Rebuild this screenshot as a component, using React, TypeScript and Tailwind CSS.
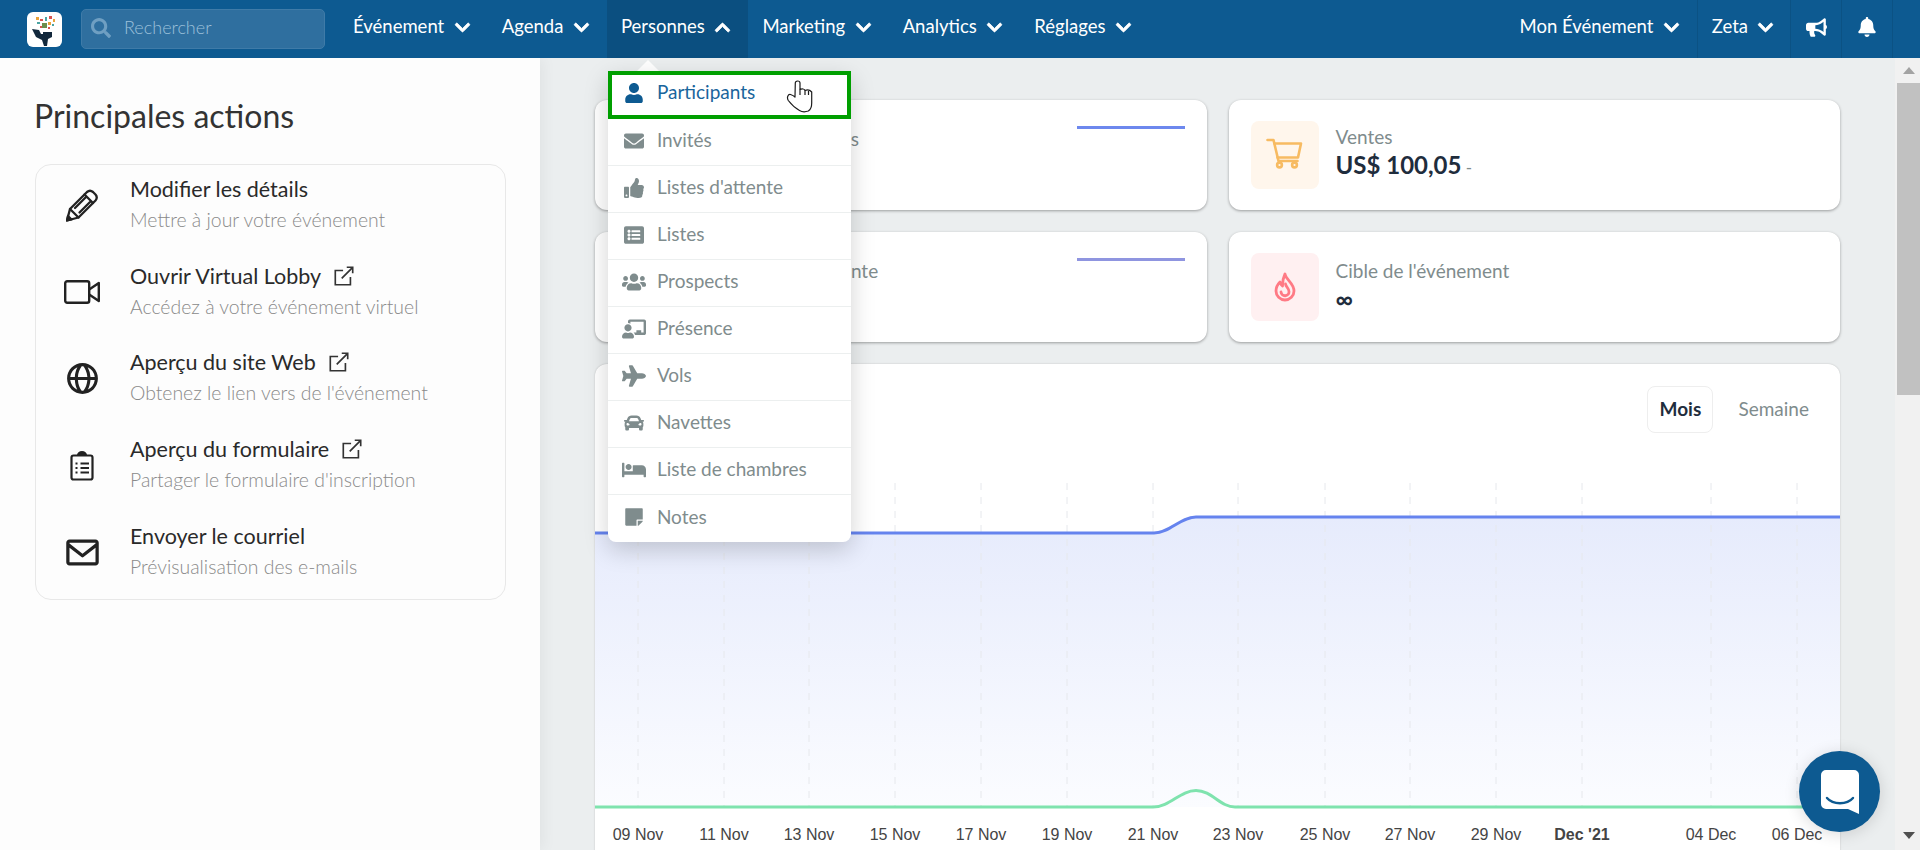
import React from "react";
import {
  FaSearch, FaChevronDown, FaChevronUp, FaBullhorn, FaBell, FaUser, FaEnvelope, FaThumbsUp, FaListAlt,
  FaUsers, FaChalkboardTeacher, FaPlane, FaCar, FaBed, FaStickyNote,
} from "react-icons/fa";
import { BiGlobe, BiEnvelope } from "react-icons/bi";

const Chevron = ({ up }: { up?: boolean }) =>
  up ? <FaChevronUp className="w-[17px] h-[17px] stroke-[24px]" /> : <FaChevronDown className="w-[17px] h-[17px] stroke-[24px]" />;

function NavItem({ label, up, active, children }: { label: string; up?: boolean; active?: boolean; children?: React.ReactNode }) {
  return (
    <div className={`relative h-full flex items-center gap-[9.5px] pl-[14px] pr-[17px] pb-[4px] ${active ? "bg-[#0b4f80]" : ""}`}>
      <span>{label}</span>
      <Chevron up={up} />
      {children}
    </div>
  );
}

const Logo = () => (
  <div className="w-[35px] h-[35px] rounded-[6px] bg-white flex items-center justify-center shrink-0">
    <svg viewBox="0 0 35 35" className="w-[35px] h-[35px]">
      <rect x="9" y="5" width="3" height="3" fill="#e9a23b" />
      <rect x="13" y="7" width="3" height="2" fill="#d9534f" />
      <rect x="18" y="5" width="2" height="4" fill="#4aa3a2" />
      <rect x="22" y="4" width="3" height="3" fill="#d9534f" />
      <rect x="26" y="7" width="2" height="3" fill="#e9a23b" />
      <rect x="10" y="10" width="3" height="2" fill="#4aa3a2" />
      <rect x="15" y="11" width="5" height="5" fill="#6b8e4e" />
      <rect x="21" y="10" width="3" height="3" fill="#e9a23b" />
      <rect x="25" y="12" width="2" height="2" fill="#4aa3a2" />
      <rect x="13" y="14" width="2" height="2" fill="#d9534f" />
      <rect x="21" y="15" width="2" height="2" fill="#d9534f" />
      <path d="M5 17 L12 18 L14 22 L16 22 L16 20 L25 20 L25 25 L21 27 L20 34 L17 34 L15 28 L9 25 Z" fill="#12283c" />
    </svg>
  </div>
);

const Header = () => (
  <header className="h-[58px] shrink-0 bg-[#0d5a91] text-white text-[18.5px] flex items-center relative z-30">
    <div className="pl-[27px] pr-[19px]"><Logo /></div>
    <div className="w-[244px] h-[40px] rounded-[5px] bg-[#2f6f9f] border border-[#3f7ba8] flex items-center pl-[9px] pb-[3px] gap-[13px] text-[#9cc0da] text-[18px] font-light">
      <FaSearch className="w-[20px] h-[20px] text-[#6f9fc2]" />
      <span>Rechercher</span>
    </div>
    <nav className="flex h-full items-center ml-[14px]">
      <NavItem label="Événement" />
      <NavItem label="Agenda" />
      <NavItem label="Personnes" up active>
        <div className="absolute left-[30px] top-[60px] w-0 h-0 border-x-[11px] border-x-transparent border-b-[11px] border-b-white" />
        <Menu />
      </NavItem>
      <NavItem label="Marketing" />
      <NavItem label="Analytics" />
      <NavItem label="Réglages" />
    </nav>
    <div className="ml-auto flex h-full items-center">
      <NavItem label="Mon Événement" />
      <div className="h-full border-l border-[#0b5284] flex items-center gap-[9px] pl-[14px] pr-[16px] pb-[4px]"><span>Zeta</span><Chevron /></div>
      <div className="h-full w-[51px] border-l border-[#0b5284] flex items-center justify-center pb-[4px]"><FaBullhorn className="w-[21px] h-[21px]" /></div>
      <div className="h-full w-[52px] border-x border-[#0b5284] flex items-center justify-center pb-[4px]"><FaBell className="w-[18px] h-[20px]" /></div>
      <div className="w-[27px]" />
    </div>
  </header>
);

const wide = "w-[24px] h-[22px] text-[#7f8c8d]";
const normal = "w-[22px] h-[20px] text-[#7f8c8d]";
const menuItems: [string, React.ComponentType<{ className?: string }>, string][] = [
  ["Invités", FaEnvelope, normal],
  ["Listes d'attente", FaThumbsUp, normal],
  ["Listes", FaListAlt, normal],
  ["Prospects", FaUsers, wide],
  ["Présence", FaChalkboardTeacher, wide],
  ["Vols", FaPlane, wide],
  ["Navettes", FaCar, normal],
  ["Liste de chambres", FaBed, wide],
  ["Notes", FaStickyNote, normal],
];

function Menu() {
  return (
    <div className="absolute left-[1px] top-[71px] w-[243px] bg-white rounded-b-[8px] shadow-[0_8px_24px_rgba(0,0,0,0.18)] text-[19px] text-[#7f8c8d]">
      <div className="h-[48px] border-[4px] border-[#009f00] flex items-center pl-[12px] pb-[5px] text-[#1a659c]">
        <span className="w-[20px] flex justify-center"><FaUser className="w-[18px] h-[20px] text-[#0d5a91]" /></span>
        <span className="ml-[13px]">Participants</span>
      </div>
      {menuItems.map(([label, Icon, cls], i) => (
        <div key={label} className={`h-[47px] flex items-center pl-[16px] pb-[3px] ${i < menuItems.length - 1 ? "border-b border-[#ecefef]" : ""}`}>
          <span className="w-[20px] flex justify-center"><Icon className={`shrink-0 ${cls}`} /></span>
          <span className="ml-[13px]">{label}</span>
        </div>
      ))}
    </div>
  );
}

const PencilIcon = () => (
  <svg viewBox="0 0 32 33" className="w-[32px] h-[33px]" fill="none" stroke="#222" strokeWidth="2.3" strokeLinejoin="round" strokeLinecap="round">
    <path d="M1 31.5 L4 20 L21 3 Q24 0.5 27 3 L29.5 5.5 Q32 8.5 29.5 11.5 L12.5 28.5 Z" />
    <path d="M4 20 L12.5 28.5 M18.5 5.5 L27 14 M9 19 L19.5 8.5 M13.5 23.5 L24 13" />
    <path d="M1 31.5 L2 27 L5.5 30.5 Z" fill="#222" />
  </svg>
);

const VideoIcon = () => (
  <svg viewBox="0 0 36 24" className="w-[36px] h-[24px]" fill="none" stroke="#222" strokeWidth="2.4" strokeLinejoin="round">
    <rect x="1.2" y="1.2" width="24" height="21.6" rx="2" />
    <path d="M25.2 9.5 L34.8 3 V21 L25.2 14.5" />
  </svg>
);

const ClipboardIcon = () => (
  <svg viewBox="0 0 24 30" className="w-[24px] h-[31px]" fill="none" stroke="#222" strokeWidth="2.2">
    <rect x="1.5" y="5" width="21" height="24" rx="2" />
    <path d="M8 5 a4 3.5 0 0 1 8 0" fill="#222" />
    <path d="M10.5 13 H19 M10.5 17.5 H19 M10.5 22 H19 M5.5 13 H7.5 M5.5 17.5 H7.5 M5.5 22 H7.5" strokeWidth="2" />
  </svg>
);

const ExternalIcon = () => (
  <svg viewBox="0 0 24 24" className="w-[22px] h-[22px]" fill="none" stroke="#333" strokeWidth="1.8">
    <path d="M19 13 V21.5 H2.5 V6 H11" />
    <path d="M9.5 14.5 L21.5 2.5 M15 2.5 H21.5 V9" />
  </svg>
);

const actions: { title: string; sub: string; ext?: boolean; icon: React.ReactNode }[] = [
  { title: "Modifier les détails", sub: "Mettre à jour votre événement", icon: <PencilIcon /> },
  { title: "Ouvrir Virtual Lobby", sub: "Accédez à votre événement virtuel", ext: true, icon: <VideoIcon /> },
  { title: "Aperçu du site Web", sub: "Obtenez le lien vers de l'événement", ext: true, icon: <BiGlobe className="w-[37px] h-[37px]" /> },
  { title: "Aperçu du formulaire", sub: "Partager le formulaire d'inscription", ext: true, icon: <ClipboardIcon /> },
  { title: "Envoyer le courriel", sub: "Prévisualisation des e-mails", icon: <BiEnvelope className="w-[39px] h-[39px]" /> },
];

const LeftPanel = () => (
  <aside className="w-[540px] shrink-0 bg-[#fdfdfd] pl-[34px] pt-[36px] shadow-[3px_0_14px_rgba(0,0,0,0.05)] relative z-10">
    <h1 className="text-[32px] leading-[44px] text-[#333] font-normal">Principales actions</h1>
    <div className="mt-[26px] ml-[1px] w-[471px] h-[436px] rounded-[16px] border border-[#e8e8e8] text-[#2a2a2a]">
      {actions.map((a) => (
        <div key={a.title} className="h-[86.6px] flex items-center pb-[8px]">
          <div className="w-[92px] mt-[3px] shrink-0 flex justify-center text-[#222]">{a.icon}</div>
          <div className="ml-[2px]">
            <div className="flex items-center gap-[12px] text-[21.5px] leading-[28px]">
              <span>{a.title}</span>
              {a.ext && <ExternalIcon />}
            </div>
            <div className="text-[19.4px] leading-[26px] mt-[4px] text-[#8a8a8a] font-light">{a.sub}</div>
          </div>
        </div>
      ))}
    </div>
  </aside>
);

const cardCls = "h-[110px] bg-white rounded-[12px] shadow-[0_1px_3px_rgba(0,0,0,0.35)] flex items-center relative pl-[22px]";

function StatCard({ box, icon, label, value, line, small }: { box: string; icon: React.ReactNode; label: React.ReactNode; value: string; line?: string; small?: boolean }) {
  return (
    <div className={cardCls}>
      <div className={`w-[68px] h-[68px] rounded-[8px] flex items-center justify-center ${box}`}>{icon}</div>
      <div className="ml-[17px]">
        <div className="text-[19px] leading-[24px] text-[#7f8c8d] -mt-[1px]">{label}</div>
        <div className="text-[24px] leading-[32px] font-bold text-[#1f2d3d]">
          {value}
          {small && <span className="text-[17px] font-normal text-[#7f8c8d]"> -</span>}
        </div>
      </div>
      {line && <div className={`absolute top-[26px] left-[482px] w-[108px] h-[3px] ${line}`} />}
    </div>
  );
}

const CartIcon = () => (
  <svg viewBox="0 0 68 68" className="w-[68px] h-[68px]" fill="none" stroke="#f7bb62" strokeWidth="2.6" strokeLinejoin="round" strokeLinecap="round">
    <path d="M16.5 19 H22.5 L27.5 40 H46.5" />
    <path d="M23.5 22.5 H50 L47 36.5 H26.5" />
    <circle cx="28.5" cy="44" r="2.4" />
    <circle cx="43.5" cy="44" r="2.4" />
  </svg>
);

const FlameIcon = () => (
  <svg viewBox="0 0 24 30" className="w-[24px] h-[30px]" fill="none" stroke="#ff7a85" strokeWidth="2.8" strokeLinejoin="round" strokeLinecap="round">
    <path d="M12 2 C13 8 21 11 21 19 A9 9 0 0 1 3 19 C3 15 5 12 7 10 C7.5 12.5 8.5 13.5 9.5 14 C9.5 9 10.5 5 12 2 Z" />
    <path d="M12.5 12 C13 15 16 16.5 16 19.5 A4 4 0 0 1 8 20" />
  </svg>
);

const gridX = [43, 129, 214, 300, 386, 472, 558, 643, 730, 815, 901, 987, 1116, 1202];
const labels = ["09 Nov", "11 Nov", "13 Nov", "15 Nov", "17 Nov", "19 Nov", "21 Nov", "23 Nov", "25 Nov", "27 Nov", "29 Nov", "Dec '21", "04 Dec", "06 Dec"];

const Chart = () => (
  <svg viewBox="0 0 1245 420" className="w-[1245px] h-[420px] block">
    <defs>
      <linearGradient id="areaBlue" x1="0" y1="0" x2="0" y2="1">
        <stop offset="0" stopColor="#e6ebfc" />
        <stop offset="1" stopColor="#fbfcff" />
      </linearGradient>
    </defs>
    <path d="M0 100 H559 C575 100 585 84 601 84 H1245 V374 H0 Z" fill="url(#areaBlue)" />
    {gridX.map((x) => (
      <line key={x} x1={x} x2={x} y1="50" y2="374" stroke="#e6e8ec" strokeWidth="1" strokeDasharray="7 7" />
    ))}
    <path d="M0 100 H559 C575 100 585 84 601 84 H1245" fill="none" stroke="#6583ee" strokeWidth="3" />
    <path d="M0 374 H558 C575 374 585 357.5 601 357.5 C617 357.5 625 374 640 374 H1245" fill="none" stroke="#7fe3ae" strokeWidth="3" />
    {gridX.map((x, i) => (
      <text key={x} x={x} y="407" textAnchor="middle" fontSize="16" fontFamily="'Liberation Sans', Arial, sans-serif" fontWeight={i === 11 ? 700 : 400} fill="#444">
        {labels[i]}
      </text>
    ))}
  </svg>
);

const Main = () => (
  <main className="flex-1 min-w-0 bg-[#ebeeef] px-[55px] pt-[42px] overflow-hidden">
    <div className="grid grid-cols-2 gap-[22px]">
      <StatCard box="bg-[#eef1fd]" icon={null} label={<span className="tracking-[-0.25px]">Participants inscrits</span>} value="1" line="bg-[#6d88ee]" />
      <StatCard box="bg-[#fff6ec]" icon={<CartIcon />} label="Ventes" value="US$ 100,05" small />
      <StatCard box="bg-[#eef1fd]" icon={null} label="Personnes en attente" value="0" line="bg-[#8f95e0]" />
      <StatCard box="bg-[#fff0f1]" icon={<FlameIcon />} label="Cible de l'événement" value="∞" />
    </div>
    <section className="mt-[22px] bg-white rounded-t-[12px] shadow-[0_0_2px_rgba(0,0,0,0.2)] overflow-hidden">
      <div className="flex justify-end items-center pt-[22px] pr-[31px] text-[19px]">
        <div className="w-[66px] h-[47px] rounded-[8px] border border-[#eeeeee] flex items-center justify-center font-bold text-[#1f2d3d]">Mois</div>
        <div className="ml-[25px] text-[#7f8c8d]">Semaine</div>
      </div>
      <Chart />
    </section>
  </main>
);

const Scrollbar = () => (
  <div className="w-[25px] shrink-0 bg-[#f1f1f1] pl-[2px] flex flex-col relative z-0">
    <div className="h-[25px] flex items-center justify-center">
      <div className="w-0 h-0 border-x-[6px] border-x-transparent border-b-[7px] border-b-[#a3a3a3]" />
    </div>
    <div className="h-[312px] bg-[#c1c1c1]" />
    <div className="flex-1" />
    <div className="h-[18px] flex items-start justify-center">
      <div className="w-0 h-0 border-x-[6px] border-x-transparent border-t-[7px] border-t-[#505050]" />
    </div>
  </div>
);

const Hand = () => (
  <svg viewBox="-1 0 27 33" className="absolute left-[786px] top-[80px] w-[27px] h-[33px] z-50" fill="#fff" stroke="#1c1c1c" strokeWidth="1.2" strokeLinejoin="round">
    <path d="M8.3 3 C8.3 0.3 13 0.3 13 3 V9.5 C15 8.6 17.5 8.8 18 10.5 C20 9.5 23 10 24.7 12 V23 C24.7 27 23 30 21.3 31 C18 32.2 15 32 12.5 30.5 C8 28 4 24 1.3 20.5 C-0.5 17.5 1 14 3.5 14.5 C5 15 7 16 8 17 Z" />
    <path d="M13 9.5 V15 M18 10.5 V15 M21.5 11 V15" fill="none" />
  </svg>
);

const Chat = () => (
  <div className="absolute left-[1799px] top-[751px] w-[81px] h-[81px] rounded-full bg-[#0d5a91] shadow-[0_2px_16px_rgba(0,0,0,0.14)] z-40 flex items-center justify-center">
    <svg viewBox="0 0 38 44" className="w-[38px] h-[44px]">
      <path d="M5 0 H33 A5 5 0 0 1 38 5 V44 L27 39 H5 A5 5 0 0 1 0 34 V5 A5 5 0 0 1 5 0 Z" fill="#fff" />
      <path d="M6 28 C12 35 26 35 32 28" fill="none" stroke="#0d5a91" strokeWidth="2.4" strokeLinecap="round" />
    </svg>
  </div>
);

export default function App() {
  return (
    <div className="relative w-[1920px] h-[850px] overflow-hidden flex flex-col [font-family:Lato,'Open_Sans',sans-serif]">
      <Header />
      <div className="flex flex-1 min-h-0">
        <LeftPanel />
        <Main />
        <Scrollbar />
      </div>
      <Hand />
      <Chat />
    </div>
  );
}
